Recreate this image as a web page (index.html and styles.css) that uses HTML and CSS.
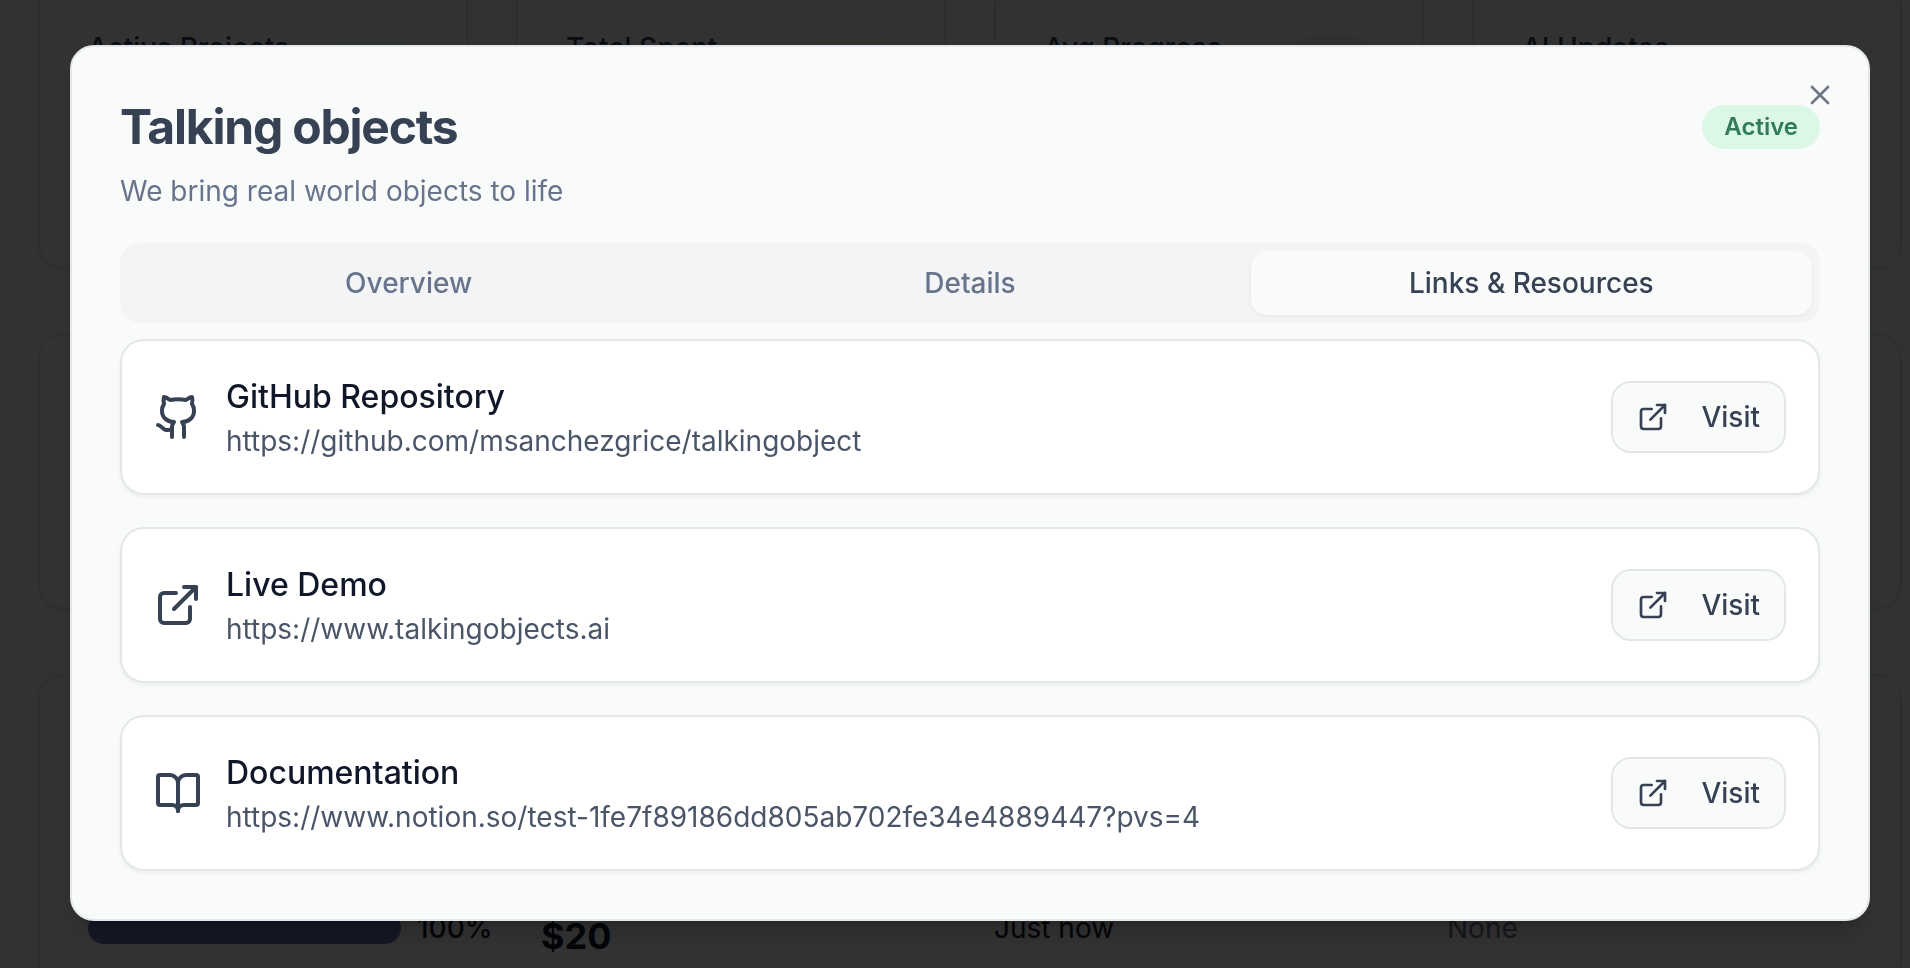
FILE: index.html
```html
<!DOCTYPE html>
<html lang="en">
<head>
<meta charset="utf-8">
<title>Project details</title>
<link rel="stylesheet" href="styles.css">
</head>
<body>
<svg class="sprite" aria-hidden="true">
  <symbol id="external" viewBox="0 0 24 24"><path d="M15 3h6v6"/><path d="M10 14 21 3"/><path d="M18 13v6a2 2 0 0 1-2 2H5a2 2 0 0 1-2-2V8a2 2 0 0 1 2-2h6"/></symbol>
  <symbol id="github" viewBox="0 0 24 24"><path d="M15 22v-4a4.8 4.8 0 0 0-1-3.500c3 0 6-2 6-5.500.08-1.250-.270-2.480-1-3.500.280-1.150.280-2.350 0-3.500 0 0-1 0-3 1.500-2.640-.500-5.360-.500-8 0C6 2 5 2 5 2c-.300 1.150-.300 2.350 0 3.500A5.403 5.403 0 0 0 4 9c0 3.500 3 5.500 6 5.500-.390.490-.680 1.050-.850 1.650-.170.600-.220 1.230-.150 1.850v4"/><path d="M9 18c-4.510 2-5-2-7-2"/></symbol>
  <symbol id="book" viewBox="0 0 24 24"><path d="M12 7v14"/><path d="M3 18a1 1 0 0 1-1-1V4a1 1 0 0 1 1-1h5a4 4 0 0 1 4 4 4 4 0 0 1 4-4h5a1 1 0 0 1 1 1v13a1 1 0 0 1-1 1h-6a3 3 0 0 0-3 3 3 3 0 0 0-3-3z"/></symbol>
  <symbol id="close" viewBox="0 0 24 24"><path d="M18 6 6 18"/><path d="m6 6 12 12"/></symbol>
</svg>

<main class="dashboard">
  <section class="stats">
    <div class="panel stat"><span>Active Projects</span><i class="chip chip-green"></i></div>
    <div class="panel stat"><span>Total Spent</span><i class="chip chip-amber"></i></div>
    <div class="panel stat"><span>Avg Progress</span><i class="chip chip-blue"></i></div>
    <div class="panel stat"><span>AI Updates</span><i class="chip chip-violet"></i></div>
  </section>
  <section class="panel summary"></section>
  <section class="panel projects">
    <div class="progress cell"><div class="bar"></div><span>100%</span></div>
    <strong class="spent">$20</strong>
    <span class="cell">Just now</span>
    <span class="cell none">None</span>
  </section>
</main>

<div class="overlay">
  <div class="dialog" role="dialog" aria-modal="true" aria-labelledby="dialog-title">
    <header class="header">
      <div class="title-row">
        <h2 class="title" id="dialog-title">Talking objects</h2>
        <span class="badge">Active</span>
      </div>
      <p class="description">We bring real world objects to life</p>
    </header>

    <div class="tabs" role="tablist">
      <button class="tab" type="button" role="tab">Overview</button>
      <button class="tab" type="button" role="tab">Details</button>
      <button class="tab active" type="button" role="tab" aria-selected="true">Links &amp; Resources</button>
    </div>

    <div class="links">
      <article class="link-card">
        <svg class="icon"><use href="#github"/></svg>
        <div class="link-text">
          <h3 class="link-title">GitHub Repository</h3>
          <p class="link-url">https://github.com/msanchezgrice/talkingobject</p>
        </div>
        <button class="visit" type="button"><svg class="icon-small"><use href="#external"/></svg>Visit</button>
      </article>
      <article class="link-card">
        <svg class="icon"><use href="#external"/></svg>
        <div class="link-text">
          <h3 class="link-title">Live Demo</h3>
          <p class="link-url">https://www.talkingobjects.ai</p>
        </div>
        <button class="visit" type="button"><svg class="icon-small"><use href="#external"/></svg>Visit</button>
      </article>
      <article class="link-card">
        <svg class="icon"><use href="#book"/></svg>
        <div class="link-text">
          <h3 class="link-title">Documentation</h3>
          <p class="link-url">https://www.notion.so/test-1fe7f89186dd805ab702fe34e4889447?pvs=4</p>
        </div>
        <button class="visit" type="button"><svg class="icon-small"><use href="#external"/></svg>Visit</button>
      </article>
    </div>

    <button class="close" type="button" aria-label="Close"><svg class="icon-small"><use href="#close"/></svg></button>
  </div>
</div>
</body>
</html>
```

FILE: styles.css
```css
* { box-sizing: border-box; }

body {
  margin: 0;
  height: 100vh;
  overflow: hidden;
  background: #f9fbfa;
  color: #0f172a;
  font: 400 28px/40px Inter, "Liberation Sans", sans-serif;
}

h2, h3, p { margin: 0; }

button {
  margin: 0;
  border: 0;
  background: none;
  color: inherit;
  font: inherit;
  cursor: pointer;
}

svg {
  display: block;
  flex: none;
  fill: none;
  stroke: currentColor;
  stroke-width: 2;
  stroke-linecap: round;
  stroke-linejoin: round;
}

.sprite { position: absolute; width: 0; height: 0; }
.icon { width: 48px; height: 48px; color: #364154; }
.icon-small { width: 32px; height: 32px; }

/* Dashboard behind the dialog */
.dashboard {
  display: flex;
  flex-direction: column;
  gap: 65px;
  height: 100vh;
  padding: 0 8px 0 38px;
}

.panel {
  border: 2px solid #e4e7eb;
  border-radius: 24px;
  background: #fbfbfb;
  box-shadow: 0 2px 4px rgb(0 0 0 / 5%);
}

.stats {
  display: grid;
  grid-template-columns: repeat(4, 1fr);
  gap: 48px;
}

.stat {
  display: flex;
  justify-content: space-between;
  height: 269px;
  padding: 28px 48px 0;
  border-top: 0;
  border-radius: 0 0 24px 24px;
  color: #364154;
  font-weight: 500;
}

.chip { width: 88px; height: 44px; margin-top: 8px; border-radius: 22px; }
.chip-green { background: #eff9f5; }
.chip-amber { background: #fdf3e0; }
.chip-blue { background: #f3eff6; }
.chip-violet { background: #f6f2f9; }

.summary { flex: none; height: 275px; }

.projects {
  display: grid;
  grid-template-columns: 453px 453px 453px 1fr;
  flex: 1;
  align-items: end;
  padding: 0 48px 12px;
  border-bottom: 0;
  border-radius: 24px 24px 0 0;
}

.cell { margin-bottom: 8px; }
.progress { display: flex; align-items: center; gap: 16px; font-weight: 500; }
.bar { width: 313px; height: 32px; border-radius: 16px; background: #6f73b9; }
.spent { font-size: 36px; font-weight: 700; }
.none { color: #67748c; }

/* Dialog */
.overlay {
  position: fixed;
  inset: 0;
  display: flex;
  align-items: center;
  justify-content: center;
  padding: 0 40px 2px 70px;
  background: rgb(0 0 0 / 80%);
}

.dialog {
  position: relative;
  flex: 1;
  max-width: 1800px;
  padding: 48px;
  border: 2px solid #e3e7eb;
  border-radius: 24px;
  background: #f9fbfa;
  color: #364154;
  box-shadow: 0 20px 30px -6px rgb(0 0 0 / 20%), 0 8px 12px -8px rgb(0 0 0 / 20%);
}

.header { display: flex; flex-direction: column; gap: 12px; margin-bottom: 32px; }
.title-row { display: flex; align-items: center; justify-content: space-between; }
.title { font-size: 48px; line-height: 64px; font-weight: 700; letter-spacing: -0.025em; }

.badge {
  padding: 6px 22px;
  border-radius: 22px;
  background: #dbf8e6;
  color: #327a5c;
  font-size: 24px;
  line-height: 32px;
  font-weight: 600;
}

.description { color: #67748c; }

.tabs {
  display: grid;
  grid-template-columns: repeat(3, 1fr);
  margin-bottom: 16px;
  padding: 8px;
  border-radius: 20px;
  background: #f3f4f6;
}

.tab {
  padding: 12px 24px;
  border-radius: 16px;
  color: #67748c;
  font-weight: 500;
}

.tab.active {
  background: #f9fbfa;
  color: #364154;
  box-shadow: 0 2px 4px rgb(0 0 0 / 5%);
}

.links { display: flex; flex-direction: column; gap: 32px; }

.link-card {
  display: flex;
  align-items: center;
  gap: 24px;
  padding: 32px;
  border: 2px solid #e3e7eb;
  border-radius: 24px;
  background: #fff;
  box-shadow: 0 2px 4px rgb(0 0 0 / 5%);
}

.link-text { flex: 1; min-width: 0; }
.link-title { color: #101729; font-size: 32px; line-height: 48px; font-weight: 500; }
.link-url { color: #4a5568; overflow-wrap: anywhere; }

.visit {
  display: flex;
  align-items: center;
  gap: 32px;
  padding: 14px 24px;
  border: 2px solid #e3e7eb;
  border-radius: 20px;
  background: #f9fbfa;
  font-weight: 500;
}

.close {
  position: absolute;
  top: 32px;
  right: 32px;
  padding: 0;
  opacity: 0.7;
}
```
